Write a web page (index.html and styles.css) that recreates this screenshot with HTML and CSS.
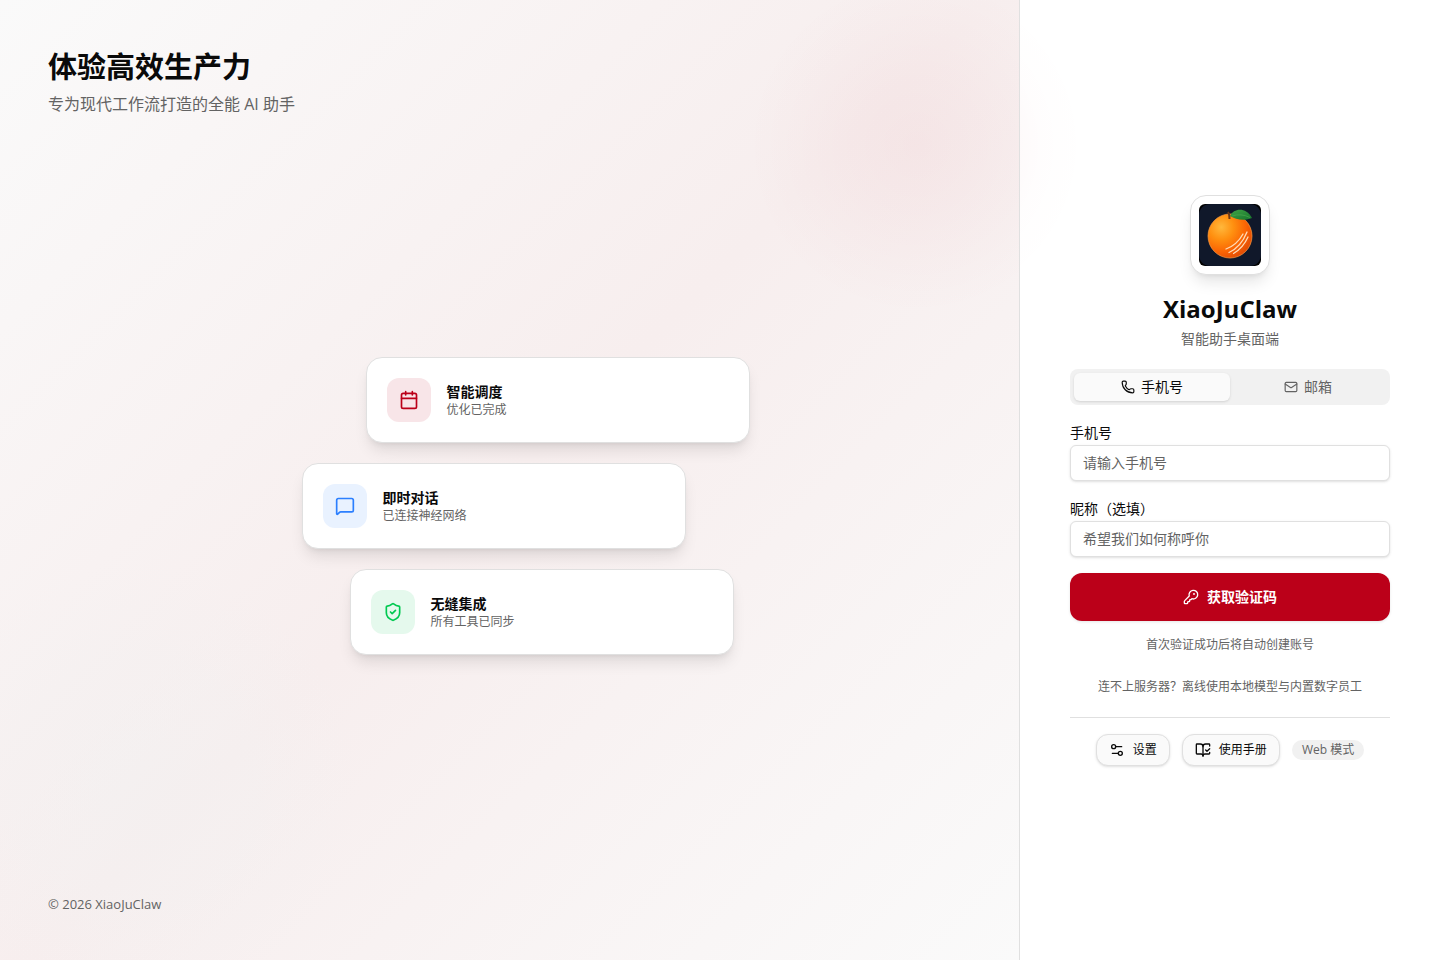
FILE: index.html
```html
<!DOCTYPE html>
<html lang="zh-CN">
<head>
<meta charset="utf-8">
<meta name="viewport" content="width=device-width, initial-scale=1">
<title>XiaoJuClaw</title>
<link rel="stylesheet" href="styles.css">
</head>
<body>
<div class="page">
  <section class="showcase">
    <header>
      <h1 class="headline">体验高效生产力</h1>
      <p class="tagline">专为现代工作流打造的全能 AI 助手</p>
    </header>
    <ul class="features">
      <li class="card card-first">
        <span class="card-icon red"><svg class="icon" width="20" height="20" viewBox="0 0 24 24"><path d="M8 2v4M16 2v4M3 10h18"/><rect width="18" height="18" x="3" y="4" rx="2"/></svg></span>
        <div><h2 class="card-title">智能调度</h2><p class="card-text">优化已完成</p></div>
      </li>
      <li class="card card-second">
        <span class="card-icon blue"><svg class="icon" width="20" height="20" viewBox="0 0 24 24"><path d="M22 17a2 2 0 0 1-2 2H6.828a2 2 0 0 0-1.414.586l-2.202 2.202A.71.71 0 0 1 2 21.286V5a2 2 0 0 1 2-2h16a2 2 0 0 1 2 2z"/></svg></span>
        <div><h2 class="card-title">即时对话</h2><p class="card-text">已连接神经网络</p></div>
      </li>
      <li class="card card-third">
        <span class="card-icon green"><svg class="icon" width="20" height="20" viewBox="0 0 24 24"><path d="M20 13c0 5-3.5 7.5-7.66 8.95a1 1 0 0 1-.67-.01C7.5 20.5 4 18 4 13V6a1 1 0 0 1 1-1c2 0 4.5-1.2 6.24-2.72a1.17 1.17 0 0 1 1.52 0C14.51 3.81 17 5 19 5a1 1 0 0 1 1 1z"/><path d="m9 12 2 2 4-4"/></svg></span>
        <div><h2 class="card-title">无缝集成</h2><p class="card-text">所有工具已同步</p></div>
      </li>
    </ul>
    <footer class="copyright">© 2026 XiaoJuClaw</footer>
  </section>

  <main class="panel">
    <div class="login">
      <div class="logo">
        <svg width="62" height="62" viewBox="0 0 62 62" role="img" aria-label="XiaoJuClaw">
          <defs>
            <radialGradient id="peel" cx=".3" cy=".3" r=".8"><stop offset="0" stop-color="#ffb83c"/><stop offset=".35" stop-color="#ff9010"/><stop offset=".7" stop-color="#fa6404"/><stop offset="1" stop-color="#de4804"/></radialGradient>
            <linearGradient id="leaf" x1="0" y1="0" x2="1" y2="1"><stop offset="0" stop-color="#3fa345"/><stop offset="1" stop-color="#17752c"/></linearGradient>
          </defs>
          <rect width="62" height="62" rx="6" fill="#000"/>
          <rect width="62" height="62" rx="11" fill="#10182a"/>
          <circle cx="31" cy="32" r="22" fill="url(#peel)" stroke="#ff9b3f" stroke-width=".7"/>
          <path d="M30.500 15q.5-4-1.500-7" fill="none" stroke="#673719" stroke-width="2"/>
          <path d="M31 12C35 4 47 3 53 14 46 17 37 16 31 12Z" fill="url(#leaf)"/>
          <path d="M33 12q9-3 18 1.500" fill="none" stroke="#4dac50" stroke-width=".6"/>
          <g fill="none" stroke="#ffdcb8" stroke-width="1.300" stroke-linecap="round"><path d="M27 45Q38 41 44 30"/><path d="M30 48.500Q42 43 48 28"/><path d="M34.500 49.500Q44 44 49 33"/></g>
        </svg>
      </div>
      <h2 class="brand">XiaoJuClaw</h2>
      <p class="subtitle">智能助手桌面端</p>

      <div class="tabs" role="tablist">
        <button class="tab active" type="button" role="tab" aria-selected="true"><svg class="icon" width="14" height="14" viewBox="0 0 24 24"><path d="M13.832 16.568a1 1 0 0 0 1.213-.303l.355-.465A2 2 0 0 1 17 15h3a2 2 0 0 1 2 2v3a2 2 0 0 1-2 2A18 18 0 0 1 2 4a2 2 0 0 1 2-2h3a2 2 0 0 1 2 2v3a2 2 0 0 1-.8 1.6l-.468.351a1 1 0 0 0-.292 1.233 14 14 0 0 0 6.392 6.384"/></svg>手机号</button>
        <button class="tab" type="button" role="tab" aria-selected="false"><svg class="icon" width="14" height="14" viewBox="0 0 24 24"><path d="m22 7-8.991 5.727a2 2 0 0 1-2.009 0L2 7"/><rect width="20" height="16" x="2" y="4" rx="2"/></svg>邮箱</button>
      </div>

      <form class="form">
        <div class="fields">
          <div class="field"><label for="phone">手机号</label><input id="phone" type="tel" placeholder="请输入手机号"></div>
          <div class="field"><label for="nickname">昵称（选填）</label><input id="nickname" type="text" placeholder="希望我们如何称呼你"></div>
        </div>
        <button class="submit" type="submit"><svg class="icon" width="16" height="16" viewBox="0 0 24 24"><path d="M2.586 17.414A2 2 0 0 0 2 18.828V21a1 1 0 0 0 1 1h3a1 1 0 0 0 1-1v-1a1 1 0 0 1 1-1h1a1 1 0 0 0 1-1v-1a1 1 0 0 1 1-1h.172a2 2 0 0 0 1.414-.586l.814-.814a6.5 6.5 0 1 0-4-4z"/><circle cx="16.5" cy="7.5" r=".5" fill="currentColor"/></svg>获取验证码</button>
      </form>
      <p class="hint">首次验证成功后将自动创建账号</p>
      <button class="offline" type="button">连不上服务器？离线使用本地模型与内置数字员工</button>
      <div class="tools">
        <button class="tool" type="button"><svg class="icon" width="16" height="16" viewBox="0 0 24 24"><path d="M14 17H5M19 7h-9"/><circle cx="17" cy="17" r="3"/><circle cx="7" cy="7" r="3"/></svg>设置</button>
        <button class="tool" type="button"><svg class="icon" width="16" height="16" viewBox="0 0 24 24"><path d="M12 21V7M16 12l2 2 4-4"/><path d="M22 6V4a1 1 0 0 0-1-1h-5a4 4 0 0 0-4 4 4 4 0 0 0-4-4H3a1 1 0 0 0-1 1v13a1 1 0 0 0 1 1h6a3 3 0 0 1 3 3 3 3 0 0 1 3-3h6a1 1 0 0 0 1-1v-1.300"/></svg>使用手册</button>
        <span class="badge">Web 模式</span>
      </div>
    </div>
  </main>
</div>
</body>
</html>
```

FILE: styles.css
```css
*, *::before, *::after { box-sizing: border-box; }
body, h1, h2, p, ul { margin: 0; padding: 0; }
body {
  background: #fff;
  color: #0a0a0a;
  font: 14px/20px "Open Sans", "Noto Sans CJK SC", sans-serif;
}
button, input { font: inherit; color: inherit; }
button { border: 0; background: none; padding: 0; cursor: pointer; }
.icon { flex: none; fill: none; stroke: currentColor; stroke-width: 2; stroke-linecap: round; stroke-linejoin: round; }
.page {
  display: grid;
  grid-template-columns: minmax(0, 1fr) 420px;
  min-height: 100vh;
  background: radial-gradient(circle at calc(100% - 523px) 145px, #bb00190c, #bb001908 80px, #bb001902 125px, transparent 170px);
}
.showcase {
  display: flex;
  flex-direction: column;
  justify-content: space-between;
  padding: 48px;
  border-right: 1px solid #e0e0e0;
  background:
    radial-gradient(circle at calc(100% - 102px) 145px, #bb00190b, #bb001907 70px, #bb001903 125px, transparent 170px),
    radial-gradient(circle at 138px 783px, #f1f1f180, #f1f1f14d 120px, #f1f1f100 220px),
    linear-gradient(135deg, #fafafa, #f7eeee 50%, #fafafa);
}
.headline { font-size: 29px; line-height: 38px; font-weight: 700; }
.tagline { margin-top: 6px; font-size: 16px; line-height: 24px; color: #636363; }
.features { display: flex; flex-direction: column; gap: 20px; width: 384px; margin: 0 auto; list-style: none; }
.card {
  display: flex;
  align-items: center;
  gap: 16px;
  padding: 20px;
  border: 1px solid #e0e0e0;
  border-radius: 16px;
  background: #fff;
  box-shadow: 0 10px 15px -3px #0000001a, 0 4px 6px -4px #0000001a;
}
.card-first { margin: 0 -48px 0 48px; }
.card-second { margin: 0 16px 0 -16px; }
.card-third { margin: 0 -32px 0 32px; }
.card-icon { display: grid; place-items: center; width: 44px; height: 44px; border-radius: 12px; }
.red { color: #bb0019; background: #f8e5e8; }
.blue { color: #2b7fff; background: #e9f2ff; }
.green { color: #00c950; background: #e5f9ed; }
.card-title { font-size: 14px; line-height: 20px; font-weight: 700; }
.card-text { font-size: 12px; line-height: 16px; color: #636363; }
.copyright { font-size: 13px; line-height: 16px; color: #636363; }
.panel { display: flex; align-items: center; justify-content: center; padding: 24px; }
.login { display: flex; flex-direction: column; align-items: center; width: 100%; max-width: 320px; }
.logo {
  display: grid;
  place-items: center;
  width: 80px;
  height: 80px;
  border: 1px solid #e0e0e0;
  border-radius: 16px;
  background: #fff;
  box-shadow: 0 10px 15px -3px #0000001a, 0 4px 6px -4px #0000001a;
}
.brand { margin-top: 16px; font-size: 24px; line-height: 36px; font-weight: 700; }
.subtitle { margin-top: 2px; color: #636363; }
.tabs { display: grid; grid-template-columns: 1fr 1fr; width: 100%; margin-top: 20px; padding: 4px; border-radius: 8px; background: #f1f1f1; }
.tab { display: flex; align-items: center; justify-content: center; gap: 6px; height: 28px; border-radius: 6px; color: #636363; }
.active { color: #0a0a0a; background: #fafafa; box-shadow: 0 1px 3px #0000001a, 0 1px 2px -1px #0000001a; }
.form { display: flex; flex-direction: column; gap: 16px; width: 100%; margin-top: 18px; }
.fields { display: flex; flex-direction: column; gap: 18px; }
.field { display: flex; flex-direction: column; gap: 2px; }
.field input { width: 100%; height: 36px; padding: 4px 12px; border: 1px solid #e0e0e0; border-radius: 6px; background: #fff; box-shadow: 0 1px 3px #0000001a, 0 1px 2px -1px #0000001a; }
.field input::placeholder { color: #636363; opacity: 1; }
.submit { display: flex; align-items: center; justify-content: center; gap: 8px; height: 48px; border-radius: 12px; background: #bb0019; color: #fff; font-weight: 700; box-shadow: 0 1px 3px #0000001a; }
.hint { margin-top: 16px; font-size: 12px; line-height: 16px; color: #636363; }
.offline { margin-top: 24px; font-size: 12px; line-height: 20px; color: #636363; }
.tools { display: flex; align-items: center; justify-content: center; gap: 12px; width: 100%; margin-top: 20px; padding-top: 16px; border-top: 1px solid #e0e0e0; }
.tool { display: flex; align-items: center; gap: 8px; height: 32px; padding: 0 12px; border: 1px solid #e0e0e0; border-radius: 12px; background: #fafafa; font-size: 12px; box-shadow: 0 1px 3px #0000001a, 0 1px 2px -1px #0000001a; }
.badge { padding: 2px 10px; border-radius: 10px; background: #f1f1f1; color: #636363; font-size: 12px; line-height: 16px; }
```
